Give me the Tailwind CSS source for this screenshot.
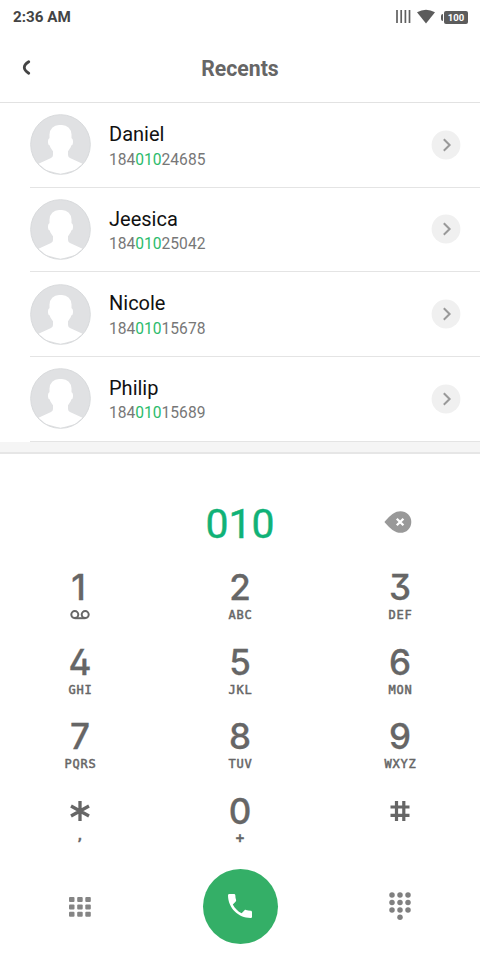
<!DOCTYPE html>
<html lang="en">
<head>
<meta charset="utf-8">
<title>Recents</title>
<script src="https://cdn.jsdelivr.net/npm/@tailwindcss/browser@4"></script>
</head>
<body class="w-[480px] h-[960px] overflow-hidden bg-white font-[Roboto,sans-serif]">
<svg class="hidden">
  <symbol id="avatar" viewBox="0 0 61 61">
    <circle cx="30.5" cy="30.5" r="29.8" fill="#e0e1e3"/>
    <g fill="#ffffff">
      <rect x="19.500" y="11" width="22" height="28" rx="9.500"/>
      <ellipse cx="19.800" cy="27.800" rx="1.800" ry="3.600"/>
      <ellipse cx="41.200" cy="27.800" rx="1.800" ry="3.600"/>
      <rect x="23" y="31" width="15" height="14"/>
      <path d="M23 38V41Q23 43 21 44L8.500 49.800L16 56L30.500 60L45 56L52.500 49.800L40 44Q38 43 38 41V38Z"/>
    </g>
    <circle cx="30.5" cy="30.5" r="29.800" fill="none" stroke="#d8dadc" stroke-width="1"/>
  </symbol>
  <symbol id="next" viewBox="0 0 30 30">
    <circle cx="15" cy="15" r="14.400" fill="#f0f0f0"/>
    <path d="M12.800 9.300L18.600 15L12.800 20.700" fill="none" stroke="#999" stroke-width="2"/>
  </symbol>
</svg>
<header class="h-[103px] border-b border-[#e2e2e2]">
  <div class="h-[34px] pl-[13px] pr-3 flex items-center justify-between">
    <span class="text-[15.200px] leading-none pt-[2px] font-bold text-[#444]">2:36 AM</span>
    <div class="flex items-center">
      <svg class="w-[46px] h-[18px]" viewBox="0 0 46 18"><path d="M2 2V15M6.200 2V15M10.400 2V15M14.500 2V15" stroke="#606060" stroke-width="1.700"/><path d="M22 4.300Q31 -1 40 4.300L31 15.500Z" fill="#5c5c5c"/></svg>
      <span class="w-[2px] h-[7px] bg-[#5c5c5c] mr-[1px] rounded-l-sm"></span>
      <span class="w-[24px] h-[13px] rounded-[2px] bg-[#5c5c5c] text-white text-[9.500px] font-bold leading-[13px] text-center">100</span>
    </div>
  </div>
  <div class="h-[68px] flex items-center px-[22px]">
    <svg class="w-[10px] h-[16px]" viewBox="0 0 10 16"><path d="M6.700 1.800Q2.300 4.500 2.300 7.500Q2.300 10.500 6.700 13.200" fill="none" stroke="#444" stroke-width="2.800" stroke-linecap="round"/></svg>
    <h1 class="flex-1 text-center pr-[10px] pt-[2px] text-[21.200px] leading-none font-bold text-[#666]">Recents</h1>
  </div>
</header>
<main class="h-[338.500px] flex flex-col pl-[30px]">
  <div class="flex-1 flex items-center border-b border-[#e4e4e4] pr-[19px]"><svg class="w-[61px] h-[61px]"><use href="#avatar"/></svg><div class="flex-1 pl-[18px] pt-[2px]"><p class="text-[20px] leading-[26px] text-[#111]">Daniel</p><p class="text-[15.600px] leading-[22px] text-[#777] pt-[1.500px]">184<span class="text-[#2bbb6b]">010</span>24685</p></div><svg class="w-[30px] h-[30px]"><use href="#next"/></svg></div>
  <div class="flex-1 flex items-center border-b border-[#e4e4e4] pr-[19px]"><svg class="w-[61px] h-[61px]"><use href="#avatar"/></svg><div class="flex-1 pl-[18px] pt-[2px]"><p class="text-[20px] leading-[26px] text-[#111]">Jeesica</p><p class="text-[15.600px] leading-[22px] text-[#777] pt-[1.500px]">184<span class="text-[#2bbb6b]">010</span>25042</p></div><svg class="w-[30px] h-[30px]"><use href="#next"/></svg></div>
  <div class="flex-1 flex items-center border-b border-[#e4e4e4] pr-[19px]"><svg class="w-[61px] h-[61px]"><use href="#avatar"/></svg><div class="flex-1 pl-[18px] pt-[2px]"><p class="text-[20px] leading-[26px] text-[#111]">Nicole</p><p class="text-[15.600px] leading-[22px] text-[#777] pt-[1.500px]">184<span class="text-[#2bbb6b]">010</span>15678</p></div><svg class="w-[30px] h-[30px]"><use href="#next"/></svg></div>
  <div class="flex-1 flex items-center border-b border-[#e4e4e4] pr-[19px]"><svg class="w-[61px] h-[61px]"><use href="#avatar"/></svg><div class="flex-1 pl-[18px] pt-[2px]"><p class="text-[20px] leading-[26px] text-[#111]">Philip</p><p class="text-[15.600px] leading-[22px] text-[#777] pt-[1.500px]">184<span class="text-[#2bbb6b]">010</span>15689</p></div><svg class="w-[30px] h-[30px]"><use href="#next"/></svg></div>
</main>
<div class="h-[12.500px] bg-[#f5f5f5] border-b-2 border-[#e6e6e6]"></div>
<section class="text-[#666]">
  <div class="h-[112px] pt-[27px] grid grid-cols-3 items-center justify-items-center">
    <span></span>
    <span class="text-[41px] leading-none text-[#10b277] pt-px [-webkit-text-stroke:.4px_#10b277]">010</span>
    <svg class="w-[28px] h-[24px] relative -left-[2px] -top-[2px]" viewBox="0 0 28 24"><path d="M.8 12.600Q.2 12 .8 11.400Q5 6.500 8.500 4C11.500 1.800 14 1.200 16.500 1.200A10.800 10.800 0 0 1 16.500 22.800C14 22.800 11.500 22.200 8.500 20Q5 17.500 .8 12.600Z" fill="#999"/><path d="M12.800 8.700L19.400 15.300M19.400 8.700L12.800 15.300" stroke="#fff" stroke-width="2.300"/></svg>
  </div>
  <div class="grid grid-cols-3 auto-rows-[74.500px] text-center font-[Inter,sans-serif] text-[35px] font-medium leading-[42px] [font-feature-settings:'cv02','cv09'] [-webkit-text-stroke:.3px_#666]">
    <div><p class="pr-[3px]">1</p><svg class="w-[20px] h-[10px] mx-auto mt-[2px]" viewBox="0 0 20 10"><g fill="none" stroke="#666" stroke-width="2"><circle cx="4.800" cy="4.600" r="3.500"/><circle cx="15.200" cy="4.600" r="3.500"/><path d="M4.600 8.200H15.400"/></g></svg></div>
    <div><p>2</p><p class="font-['DejaVu_Sans_Mono',monospace] text-[12px] leading-[14px] tracking-[.8px] pl-px font-normal [-webkit-text-stroke:.5px_#666]">ABC</p></div>
    <div><p>3</p><p class="font-['DejaVu_Sans_Mono',monospace] text-[12px] leading-[14px] tracking-[.8px] pl-px font-normal [-webkit-text-stroke:.5px_#666]">DEF</p></div>
    <div><p>4</p><p class="font-['DejaVu_Sans_Mono',monospace] text-[12px] leading-[14px] tracking-[.8px] pl-px font-normal [-webkit-text-stroke:.5px_#666]">GHI</p></div>
    <div><p>5</p><p class="font-['DejaVu_Sans_Mono',monospace] text-[12px] leading-[14px] tracking-[.8px] pl-px font-normal [-webkit-text-stroke:.5px_#666]">JKL</p></div>
    <div><p>6</p><p class="font-['DejaVu_Sans_Mono',monospace] text-[12px] leading-[14px] tracking-[.8px] pl-px font-normal [-webkit-text-stroke:.5px_#666]">MON</p></div>
    <div><p>7</p><p class="font-['DejaVu_Sans_Mono',monospace] text-[12px] leading-[14px] tracking-[.8px] pl-px font-normal [-webkit-text-stroke:.5px_#666]">PQRS</p></div>
    <div><p>8</p><p class="font-['DejaVu_Sans_Mono',monospace] text-[12px] leading-[14px] tracking-[.8px] pl-px font-normal [-webkit-text-stroke:.5px_#666]">TUV</p></div>
    <div><p>9</p><p class="font-['DejaVu_Sans_Mono',monospace] text-[12px] leading-[14px] tracking-[.8px] pl-px font-normal [-webkit-text-stroke:.5px_#666]">WXYZ</p></div>
    <div><svg class="w-[20px] h-[42px] mx-auto" viewBox="0 0 20 42"><path d="M10 11V31M1 16L19 26M19 16L1 26" stroke="#666" stroke-width="3.300"/></svg><p class="font-['DejaVu_Sans_Mono',monospace] text-[13px] leading-[7px] font-bold">,</p></div>
    <div><p>0</p><p class="font-['DejaVu_Sans_Mono',monospace] text-[14px] leading-[13px] font-bold">+</p></div>
    <div><svg class="w-[20px] h-[42px] mx-auto" viewBox="0 0 20 42"><path d="M6.500 11V31M13.800 11V31M.5 17H19.500M.5 25.300H19.500" stroke="#666" stroke-width="3.200"/></svg></div>
  </div>
  <div class="h-[84px] grid grid-cols-3 items-center justify-items-center">
    <svg class="w-[22px] h-[20px] mt-px" viewBox="0 0 22 20" fill="#858585"><rect width="5.500" height="5" rx="1"/><rect x="8.200" width="5.500" height="5" rx="1"/><rect x="16.300" width="5.500" height="5" rx="1"/><rect y="7.400" width="5.500" height="5" rx="1"/><rect x="8.200" y="7.400" width="5.500" height="5" rx="1"/><rect x="16.300" y="7.400" width="5.500" height="5" rx="1"/><rect y="14.800" width="5.500" height="5" rx="1"/><rect x="8.200" y="14.800" width="5.500" height="5" rx="1"/><rect x="16.300" y="14.800" width="5.500" height="5" rx="1"/></svg>
    <button class="size-[75px] rounded-full bg-[#34af67] flex items-center justify-center"><svg class="w-[32px] h-[32px]" viewBox="0 0 24 24"><path fill="#fff" d="M6.620 10.790c1.440 2.830 3.760 5.140 6.590 6.590l2.200-2.200c.27-.27.670-.36 1.020-.24 1.120.37 2.330.57 3.570.57.550 0 1 .45 1 1V20c0 .55-.45 1-1 1-9.390 0-17-7.610-17-17 0-.55.450-1 1-1h3.500c.55 0 1 .45 1 1 0 1.250.2 2.450.57 3.570.110.350.030.740-.25 1.020z"/></svg></button>
    <svg class="w-[22px] h-[28px]" viewBox="0 0 22 28" fill="#808080"><circle cx="3" cy="3" r="2.750"/><circle cx="11" cy="3" r="2.750"/><circle cx="19" cy="3" r="2.750"/><circle cx="3" cy="10.500" r="2.750"/><circle cx="11" cy="10.500" r="2.750"/><circle cx="19" cy="10.500" r="2.750"/><circle cx="3" cy="18" r="2.750"/><circle cx="11" cy="18" r="2.750"/><circle cx="19" cy="18" r="2.750"/><circle cx="11" cy="25.200" r="2.750"/></svg>
  </div>
</section>
</body>
</html>
